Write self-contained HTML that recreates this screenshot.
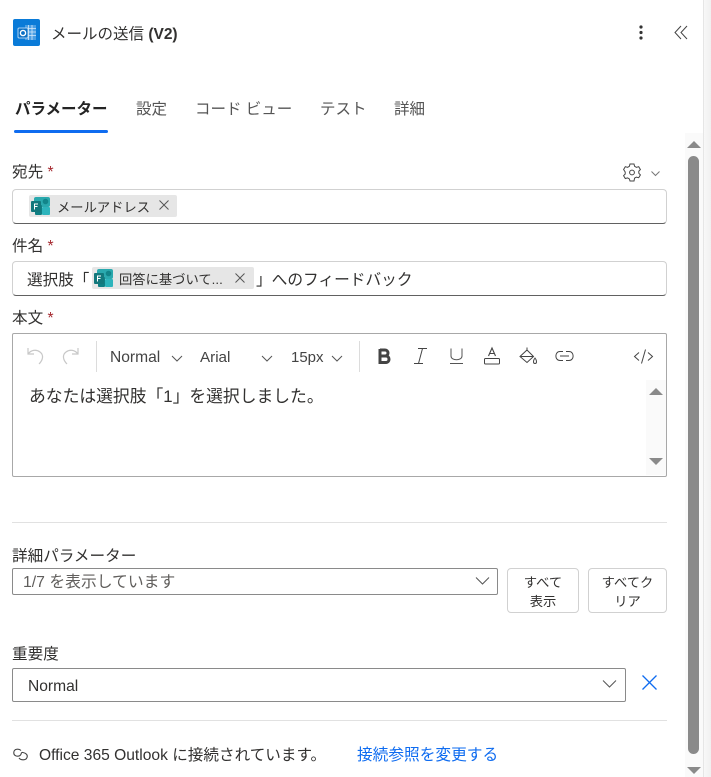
<!DOCTYPE html>
<html lang="ja"><head><meta charset="utf-8">
<style>
html,body{margin:0;padding:0;width:711px;height:777px;overflow:hidden;background:#fff}
body{position:relative;font-family:"Liberation Sans","Noto Sans CJK JP",sans-serif;color:#323130;font-size:15.6px}
.t{position:absolute;white-space:nowrap;line-height:20px}
.box{position:absolute;box-sizing:border-box;background:#fff}
.in{border:1px solid #d1d1d1;border-bottom:1px solid #616161;border-radius:4px}
.chip{position:absolute;background:#e6e6e6;border-radius:2px;height:22px}
.r{color:#a4262c}
svg{position:absolute;overflow:visible}
.hr{position:absolute;left:12px;width:655px;height:1px;background:#e1e1e1}
.btn{position:absolute;box-sizing:border-box;border:1px solid #d1d1d1;border-radius:4px;text-align:center;font-size:13.300px;line-height:19px;padding-top:4px;color:#323130}
.tab{font-size:15.500px;color:#555;top:100px}
</style></head><body>

<!-- header -->
<svg style="left:13px;top:19px" width="27" height="27" viewBox="0 0 27 27">
<rect width="27" height="27" rx="2" fill="#0a7bd8"/>
<rect x="12" y="6" width="11" height="15" fill="#4a9ee4"/>
<path d="M12 9.500H23M12 13H23M12 16.500H23M15.500 6V21M19 6V21" stroke="#d8eafa" stroke-width=".8"/>
<rect x="5" y="9" width="10" height="10" rx="1" fill="#0a6fc4" stroke="#d9ecfb" stroke-width=".8"/>
<circle cx="10" cy="14" r="2.600" fill="none" stroke="#fff" stroke-width="1.400"/>
</svg>
<div class="t" style="left:51px;top:25px;font-size:15.500px">メールの送信 <span style="font-weight:700;font-size:15.500px">(V2)</span></div>
<svg style="left:639px;top:25px" width="4" height="15"><circle cx="2" cy="2" r="1.600" fill="#333"/><circle cx="2" cy="7.500" r="1.600" fill="#333"/><circle cx="2" cy="13" r="1.600" fill="#333"/></svg>
<svg style="left:674px;top:25px" width="14" height="15" fill="none" stroke="#444" stroke-width="1"><path d="M7 1L1 7.500L7 14M13 1L7 7.500L13 14"/></svg>

<!-- tabs -->
<div class="t" style="left:15px;top:100px;font-size:15.500px;font-weight:700;color:#242424">パラメーター</div>
<div style="position:absolute;left:14px;top:130px;width:94px;height:3px;border-radius:2px;background:#0f6cf0"></div>
<div class="t tab" style="left:136px">設定</div>
<div class="t tab" style="left:195px">コード ビュー</div>
<div class="t tab" style="left:320px">テスト</div>
<div class="t tab" style="left:394px">詳細</div>

<!-- 宛先 -->
<div class="t" style="left:12px;top:163px">宛先 <span class="r">*</span></div>
<svg style="left:622px;top:163px" width="20" height="19" viewBox="0 0 20 19" fill="none" stroke="#444" stroke-width="1"><path d="M8 1h4l.6 2.300 1.800 1 2.300-.6 1.700 2.800-1.600 1.700v2l1.600 1.700-1.700 2.800-2.300-.6-1.800 1L12 18H8l-.6-2.100-1.800-1-2.300.6-1.700-2.800 1.600-1.700v-2L1.600 6.500l1.700-2.800 2.300.6 1.800-1z"/><circle cx="10" cy="9.500" r="2.400"/></svg>
<svg style="left:651px;top:171px" width="9" height="5" fill="none" stroke="#777"><path d="M.5.500L4.500 4.500 8.500.500"/></svg>
<div class="box in" style="left:12px;top:189px;width:655px;height:35px"></div>
<div class="chip" style="left:29px;top:195px;width:148px"></div>
<svg style="left:30px;top:196px" width="21" height="20" viewBox="0 0 21 20">
<rect x="4" y="1" width="16" height="10" rx="2" fill="#2aa9ae"/><circle cx="15.500" cy="5.500" r="2.800" fill="#12858a"/>
<rect x="5" y="9" width="7" height="10" rx="1" fill="#0f7f84"/><rect x="12" y="11" width="8" height="8" rx="1" fill="#2db4bc"/>
<rect x="1" y="5" width="10" height="11" rx="1" fill="#13787c"/><path d="M4.500 13.500V8H8M4.500 10.500H7.500" stroke="#fff" fill="none"/>
</svg>
<div class="t" style="left:57px;top:198px;font-size:13.300px">メールアドレス</div>
<svg style="left:159px;top:200px" width="10" height="10" fill="none" stroke="#555"><path d="M.5.500L9.500 9.500M9.500.500L.5 9.500"/></svg>

<!-- 件名 -->
<div class="t" style="left:12px;top:237px">件名 <span class="r">*</span></div>
<div class="box in" style="left:12px;top:261px;width:655px;height:35px"></div>
<div class="t" style="left:27px;top:271px">選択肢「</div>
<div class="chip" style="left:92px;top:267px;width:162px"></div>
<svg style="left:93px;top:268px" width="21" height="20" viewBox="0 0 21 20">
<rect x="4" y="1" width="16" height="10" rx="2" fill="#2aa9ae"/><circle cx="15.500" cy="5.500" r="2.800" fill="#12858a"/>
<rect x="5" y="9" width="7" height="10" rx="1" fill="#0f7f84"/><rect x="12" y="11" width="8" height="8" rx="1" fill="#2db4bc"/>
<rect x="1" y="5" width="10" height="11" rx="1" fill="#13787c"/><path d="M4.500 13.500V8H8M4.500 10.500H7.500" stroke="#fff" fill="none"/>
</svg>
<div class="t" style="left:119px;top:270px;font-size:13.300px">回答に基づいて...</div>
<svg style="left:235px;top:273px" width="10" height="10" fill="none" stroke="#555"><path d="M.5.500L9.500 9.500M9.500.500L.5 9.500"/></svg>
<div class="t" style="left:256px;top:271px;font-size:15.700px">」へのフィードバック</div>

<!-- 本文 -->
<div class="t" style="left:12px;top:309px">本文 <span class="r">*</span></div>
<div class="box" style="left:12px;top:333px;width:655px;height:144px;border:1px solid #a8a8a8;border-radius:2px"></div>
<svg style="left:27px;top:347px" width="18" height="18" fill="none" stroke="#c8c8c8" stroke-width="1.200"><path d="M1 1V7H7M1 7C4 3 9 2 13 5 17 8 16 13 12 17"/></svg>
<svg style="left:62px;top:347px" width="18" height="18" fill="none" stroke="#c8c8c8" stroke-width="1.200"><path d="M16 1V7H10M16 7C13 3 8 2 4 5 0 8 1 13 5 17"/></svg>
<div style="position:absolute;left:96px;top:341px;width:1px;height:31px;background:#dcdcdc"></div>
<div class="t" style="left:110px;top:348px;color:#444;font-size:15.600px">Normal</div>
<svg style="left:171px;top:355px" width="12" height="7" fill="none" stroke="#555"><path d="M1 1L6 6 11 1"/></svg>
<div class="t" style="left:200px;top:348px;color:#444;font-size:15.200px">Arial</div>
<svg style="left:261px;top:355px" width="12" height="7" fill="none" stroke="#555"><path d="M1 1L6 6 11 1"/></svg>
<div class="t" style="left:291px;top:348px;color:#444;font-size:15px">15px</div>
<svg style="left:331px;top:355px" width="12" height="7" fill="none" stroke="#555"><path d="M1 1L6 6 11 1"/></svg>
<div style="position:absolute;left:359px;top:341px;width:1px;height:31px;background:#dcdcdc"></div>
<svg style="left:378px;top:348px" width="13" height="17" fill="none" stroke="#444" stroke-width="3"><path d="M2 2H7C11 2 11 8 7 8H2M2 8H8C12 8 12 14.500 8 14.500H2ZM2 1V15.500"/></svg>
<svg style="left:413px;top:348px" width="15" height="17" fill="none" stroke="#444"><path d="M5 .5H14M1 15.500H10M9.500 .5L5.500 15.500"/></svg>
<svg style="left:450px;top:348px" width="13" height="17" fill="none" stroke="#555"><path d="M1 .5V8C1 13 12 13 12 8V.5M0 15.500H13"/></svg>
<svg style="left:484px;top:347px" width="16" height="18" fill="none" stroke="#444"><path d="M4.500 9L8 1 11.500 9M5.500 6.500H10.500" stroke-width="1.100"/><rect x=".5" y="11.500" width="15" height="5.500" rx="1"/></svg>
<svg style="left:519px;top:347px" width="19" height="18" fill="none" stroke="#444"><path d="M8 .5V4M8 3L14.500 9.500 8 15.500 1 9.500ZM2 9.500H14"/><path d="M16 11C14 13.500 14 16.500 16 16.500 18 16.500 18 13.500 16 11Z"/></svg>
<svg style="left:555px;top:351px" width="19" height="10" fill="none" stroke="#444"><path d="M8 .5H5C-.5 .5-.5 9.500 5 9.500H8M11 .5H14C19.500 .5 19.500 9.500 14 9.500H11M5 5H14"/></svg>
<svg style="left:634px;top:349px" width="19" height="15" fill="none" stroke="#444"><path d="M5 3.500L.5 7.500 5 11.500M14 3.500L18.500 7.500 14 11.500M11.500 .5L7.500 14.500"/></svg>
<div class="t" style="left:29px;top:387px;font-size:16.800px">あなたは選択肢「1」を選択しました。</div>
<div style="position:absolute;left:646px;top:380px;width:20px;height:95px;background:#fafafa"></div>
<svg style="left:649px;top:388px" width="14" height="78"><path d="M0 7L7 0 14 7Z" fill="#8a8a8a"/><path d="M0 70H14L7 77Z" fill="#8a8a8a"/></svg>

<div class="hr" style="top:522px"></div>

<!-- 詳細 -->
<div class="t" style="left:12px;top:547px">詳細パラメーター</div>
<div class="box" style="left:12px;top:568px;width:486px;height:27px;border:1px solid #8a8a8a;border-radius:2px"></div>
<div class="t" style="left:23px;top:573px;color:#605e5c;font-size:15.800px">1/7 を表示しています</div>
<svg style="left:475px;top:577px" width="15" height="8" fill="none" stroke="#555"><path d="M1 .5L7.500 7 14 .5"/></svg>
<div class="btn" style="left:507px;top:568px;width:72px;height:45px">すべて<br>表示</div>
<div class="btn" style="left:588px;top:568px;width:79px;height:45px">すべてク<br>リア</div>

<!-- 重要度 -->
<div class="t" style="left:12px;top:645px">重要度</div>
<div class="box" style="left:12px;top:668px;width:614px;height:34px;border:1px solid #8a8a8a;border-radius:2px"></div>
<div class="t" style="left:28px;top:677px">Normal</div>
<svg style="left:602px;top:680px" width="15" height="8" fill="none" stroke="#555"><path d="M1 .5L7.500 7 14 .5"/></svg>
<svg style="left:642px;top:675px" width="15" height="15" fill="none" stroke="#0f6cf0" stroke-width="1.300"><path d="M.5.500L14.500 14.500M14.500.500L.5 14.500"/></svg>

<div class="hr" style="top:720px"></div>

<!-- footer -->
<svg style="left:13px;top:748px" width="16" height="13" fill="none" stroke="#444" stroke-width="1.100"><path d="M8 2.500C6 .5 1 .5 .8 4.500 .6 8 4.500 9 7 7.500 9 6 7.500 4 10 4.500 13 5 15 7 14 9.500 13 12.500 8 12.500 6 10"/></svg>
<div class="t" style="left:39px;top:746px">Office 365 Outlook に接続されています。</div>
<div class="t" style="left:357px;top:746px;color:#0f6cf0;font-size:15.700px">接続参照を変更する</div>

<!-- scrollbar -->
<div style="position:absolute;left:685px;top:133px;width:18px;height:644px;background:#fafafa"></div>
<svg style="left:687px;top:141px" width="14" height="8"><path d="M0 7L7 0 14 7Z" fill="#8a8a8a"/></svg>
<div style="position:absolute;left:688px;top:156px;width:11px;height:598px;border-radius:6px;background:#8a8a8a"></div>
<svg style="left:687px;top:767px" width="14" height="8"><path d="M0 0H14L7 7Z" fill="#8a8a8a"/></svg>
<div style="position:absolute;left:703px;top:0;width:1px;height:777px;background:#e6e6e6"></div>
<div style="position:absolute;left:704px;top:0;width:7px;height:777px;background:linear-gradient(90deg,#f8f8f8,#f0f0f0)"></div>
</body></html>
